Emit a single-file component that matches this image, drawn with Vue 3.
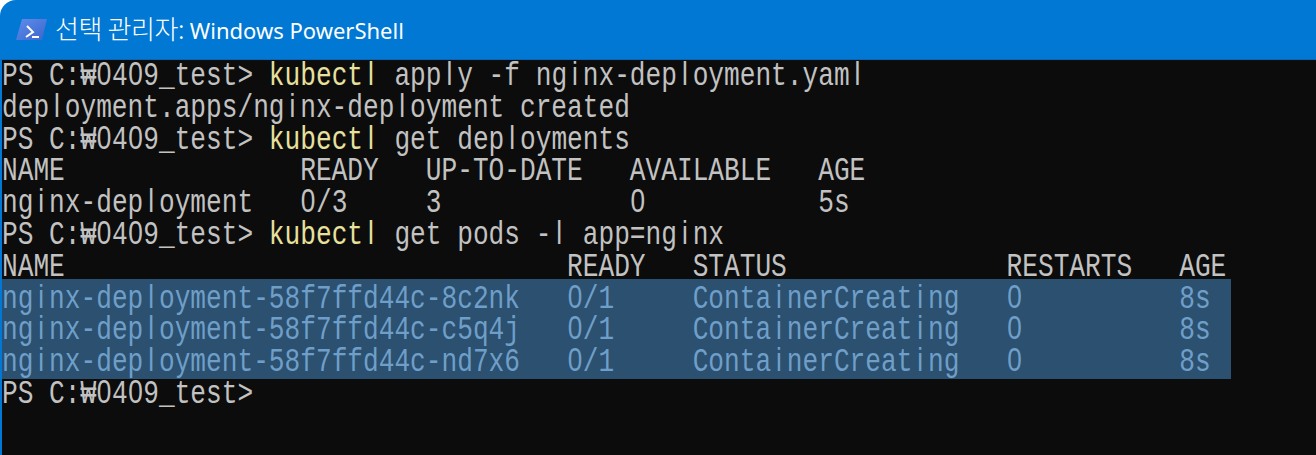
<script setup>
const prompt = 'PS C:₩0409_test> '
const cmdRow = (rest) => [
  { text: prompt },
  { text: 'kubectl', cmd: true },
  { text: rest }
]
const plain = (text) => [{ text }]

const rows = [
  cmdRow(' apply -f nginx-deployment.yaml'),
  plain('deployment.apps/nginx-deployment created'),
  cmdRow(' get deployments'),
  plain('NAME               READY   UP-TO-DATE   AVAILABLE   AGE'),
  plain('nginx-deployment   0/3     3            0           5s'),
  cmdRow(' get pods -l app=nginx'),
  plain('NAME                                READY   STATUS              RESTARTS   AGE')
]
const selected = [
  plain('nginx-deployment-58f7ffd44c-8c2nk   0/1     ContainerCreating   0          8s'),
  plain('nginx-deployment-58f7ffd44c-c5q4j   0/1     ContainerCreating   0          8s'),
  plain('nginx-deployment-58f7ffd44c-nd7x6   0/1     ContainerCreating   0          8s')
]
const last = plain('PS C:₩0409_test>')

// The console font draws l, i and 0 as plain bars and ovals, so those letters
// sit in a fixed cell and use a sans face instead of the mono one.
const pieces = (text) => text.split(/([li0])/).filter(Boolean)
const isCell = (p) => p === 'l' || p === 'i' || p === '0'
</script>

<template>
  <div class="window">
    <header class="titlebar">
      <svg class="icon" viewBox="0 0 32 25" width="32" height="25" aria-hidden="true">
        <defs>
          <linearGradient id="psg" x1="0" y1="0" x2="1" y2="1">
            <stop offset="0" stop-color="#5f8cec" />
            <stop offset="1" stop-color="#3a66cc" />
          </linearGradient>
        </defs>
        <path d="M6 2H31L26 23H0Z" fill="url(#psg)" />
        <path d="M11 9l6 6-7 5" fill="none" stroke="#fff" stroke-width="2" />
        <path d="M16 20h7" stroke="#fff" stroke-width="2" />
      </svg>
      <span class="title"><span class="ko">선택 관리자:</span> Windows PowerShell</span>
    </header>
    <main class="term">
      <div v-for="(row, i) in rows" :key="i" class="line">
        <span class="txt"><span v-for="(run, j) in row" :key="j" :class="{ cmd: run.cmd }"><template v-for="(p, k) in pieces(run.text)" :key="k"><span v-if="isCell(p)" class="cell">{{ p }}</span><template v-else>{{ p }}</template></template></span></span>
      </div>
      <div class="selection">
        <div v-for="(row, i) in selected" :key="i" class="line">
          <span class="txt"><span v-for="(run, j) in row" :key="j"><template v-for="(p, k) in pieces(run.text)" :key="k"><span v-if="isCell(p)" class="cell">{{ p }}</span><template v-else>{{ p }}</template></template></span></span>
        </div>
      </div>
      <div class="line">
        <span class="txt"><span v-for="(run, j) in last" :key="j"><template v-for="(p, k) in pieces(run.text)" :key="k"><span v-if="isCell(p)" class="cell">{{ p }}</span><template v-else>{{ p }}</template></template></span></span>
      </div>
    </main>
  </div>
</template>

<style scoped>
.window {
  width: 1316px;
  height: 455px;
  background: #0078d4;
  border-top-left-radius: 16px;
  overflow: hidden;
  display: flex;
  flex-direction: column;
}
.titlebar {
  height: 60px;
  flex: none;
  display: flex;
  align-items: center;
  gap: 7px;
  padding-left: 16px;
  box-sizing: border-box;
  border-bottom: 1px solid #0a66b4;
}
.icon { flex: none; }
.title {
  color: #fff;
  font-family: "Noto Sans", "Noto Sans CJK KR", sans-serif;
  font-size: 22px;
  white-space: pre;
  margin-bottom: 4px;
}
.ko {
  font-family: "Noto Sans CJK KR", sans-serif;
  font-size: 26px;
  font-weight: 300;
  letter-spacing: -0.4px;
}
.term {
  flex: 1;
  margin-left: 2px;
  padding-top: 1px;
  background: #0c0c0c;
  color: #c2c2c2;
  font-family: "Liberation Mono", monospace;
  font-size: 26.17px;
}
.line {
  height: 31.8px;
  line-height: 31.8px;
  white-space: pre;
}
.txt {
  display: inline-block;
  line-height: 24.4px;
  transform: scaleY(1.3);
  transform-origin: center;
}
.cell {
  display: inline-block;
  width: 15.7px;
  text-align: center;
  font-family: "Liberation Sans", sans-serif;
}
.cmd { color: #e8e09c; }
.selection {
  width: 1229px;
  background: #2b5070;
  color: #6f9fc8;
  padding-top: 4.6px;
  margin-top: -4.6px;
}
</style>

<style>
html, body { background: #fff; }
</style>
